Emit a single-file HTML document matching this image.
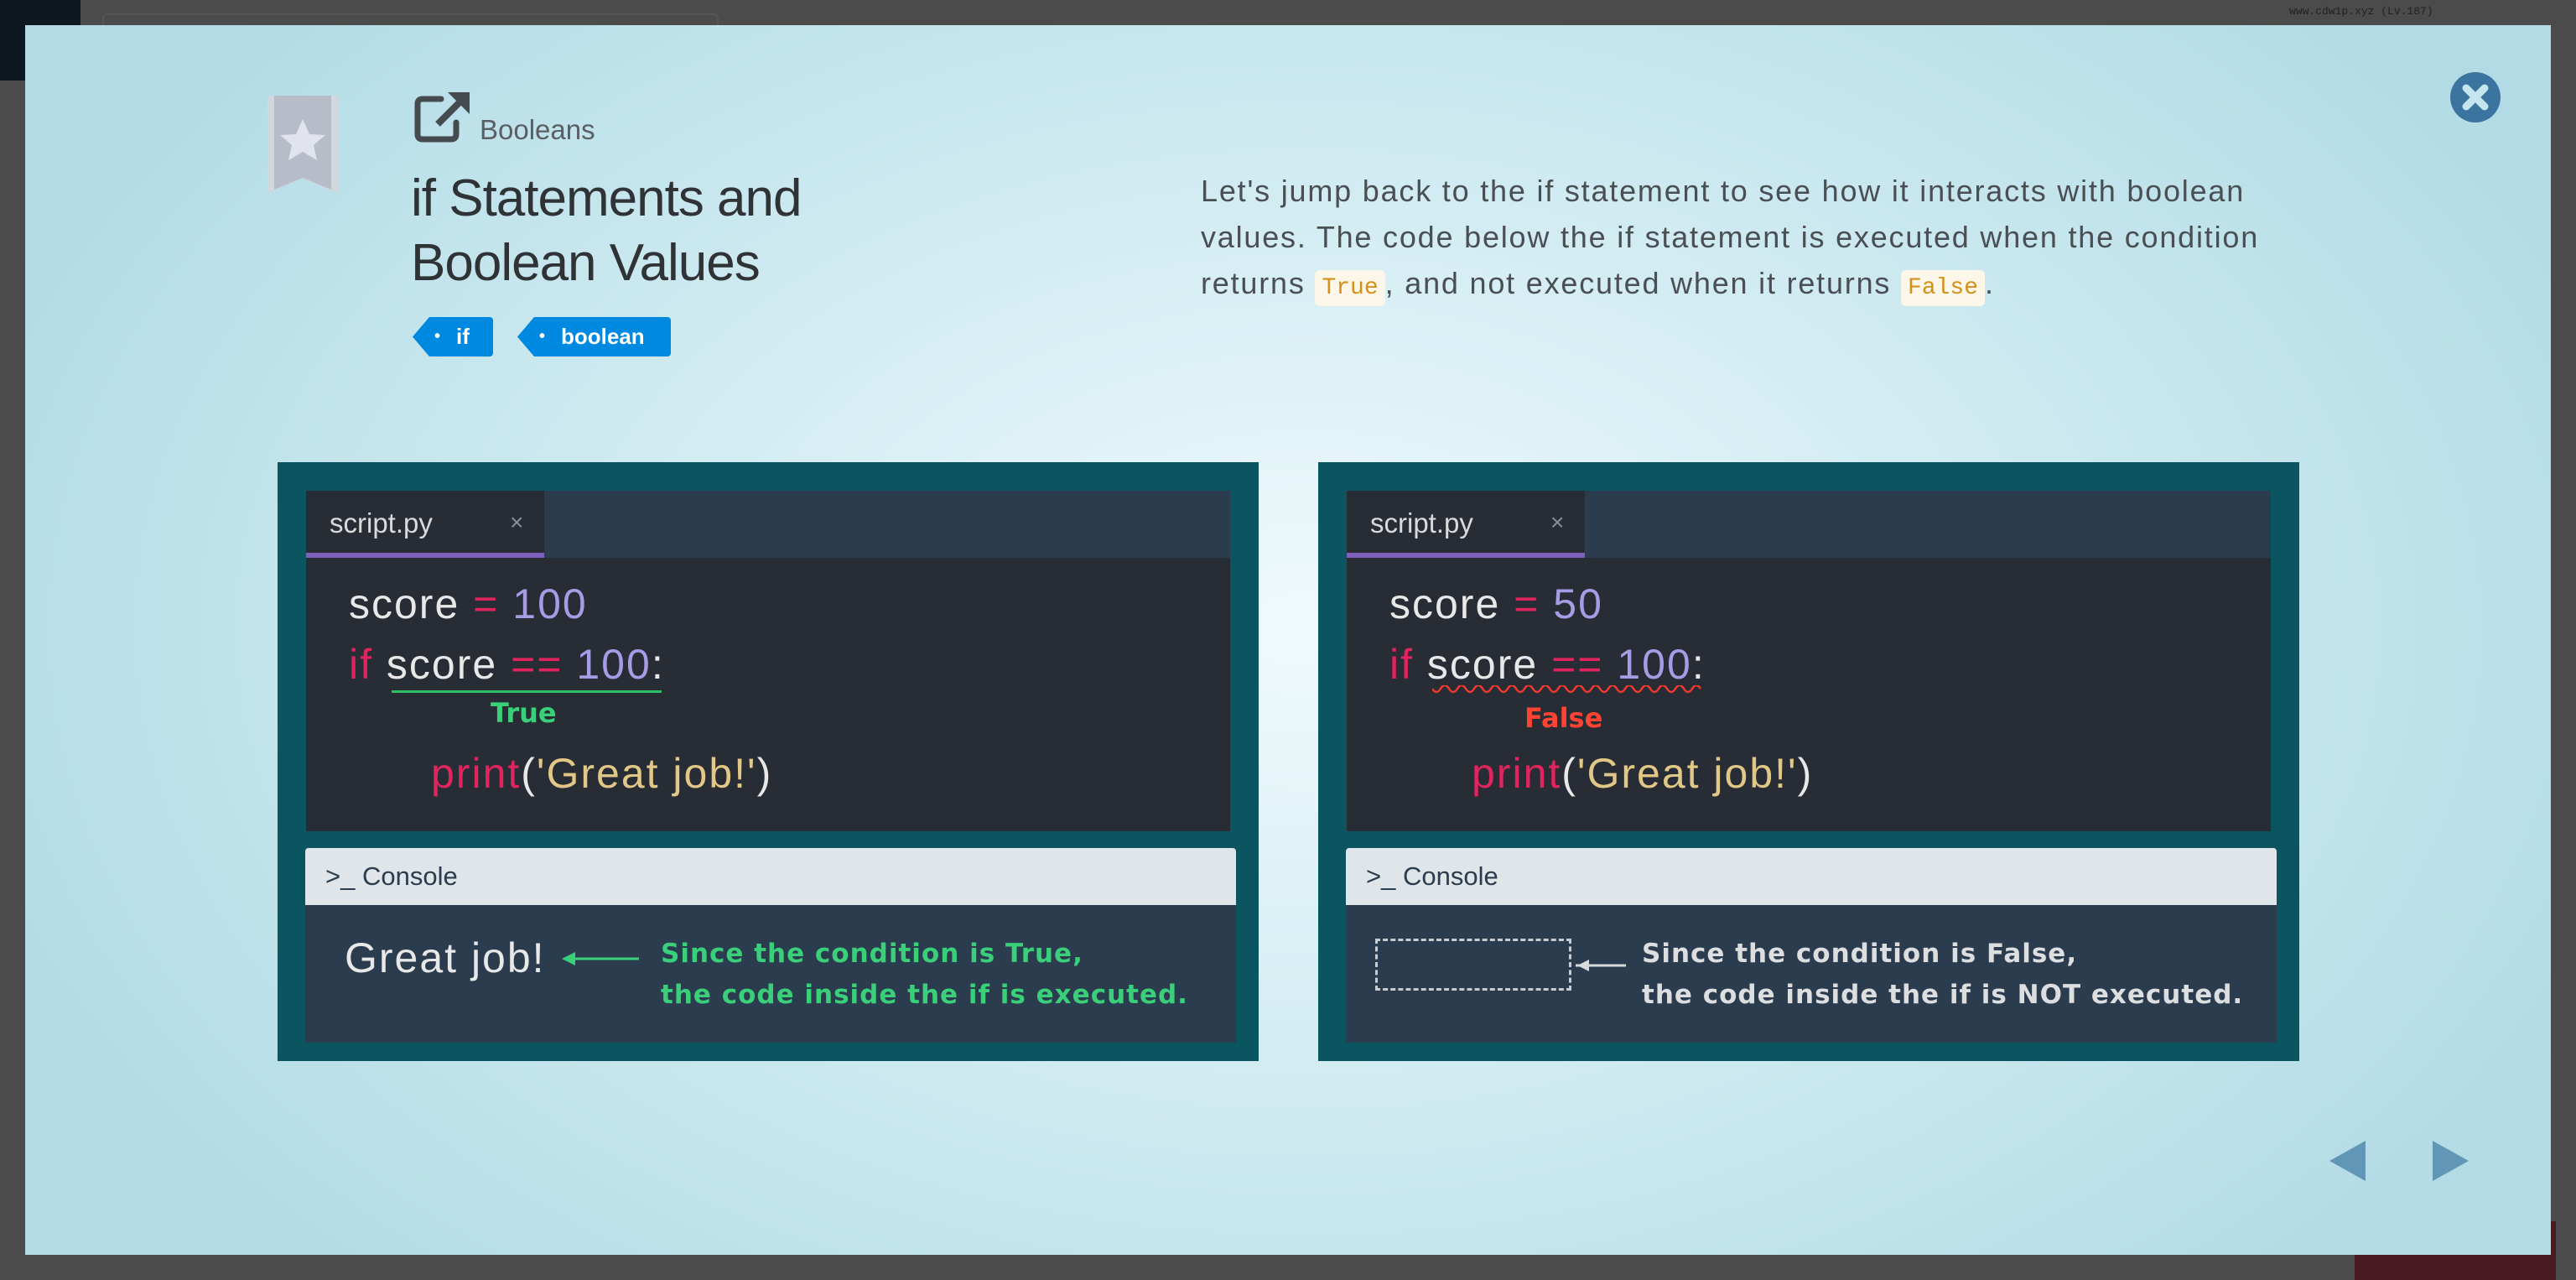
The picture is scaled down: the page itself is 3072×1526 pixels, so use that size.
<!DOCTYPE html>
<html><head><meta charset="utf-8"><style>
*{margin:0;padding:0;box-sizing:border-box}
body{width:3072px;height:1526px;background:#4b4b4b;position:relative;overflow:hidden;font-family:"Liberation Sans",sans-serif}
.a{position:absolute}
#modal{left:30px;top:30px;width:3012px;height:1466px;background:radial-gradient(ellipse 1700px 1100px at 1530px 720px,#f0fafc 0%,#d6eef4 40%,#b2dbe5 100%);overflow:hidden}
.title{font-size:62px;color:#2f3336;letter-spacing:-1px;line-height:77px;font-weight:normal}
.para{font-size:36px;color:#4a4f53;line-height:55px;letter-spacing:1.8px;white-space:nowrap}
.code-chip{background:#fdf7ea;color:#d4901a;font-family:"Liberation Mono",monospace;font-size:28px;padding:6px 8px;border-radius:6px;letter-spacing:0}
.tag{background:#0089e0;color:#fff;font-size:26px;font-weight:bold;height:47px;line-height:47px;clip-path:polygon(20px 0,100% 0,100% 100%,20px 100%,0 50%);border-radius:4px}
.panel{background:#0b5561;width:1170px;height:714px;top:521px}
.tabbar{left:34px;top:34px;width:1102px;height:80px;background:#2b3c4f}
.tab{left:0;top:0;width:284px;height:80px;background:#282c34;border-bottom:6px solid #7e5fc0}
.tab span{position:absolute;left:28px;top:20px;font-size:33px;color:#d8dadc}
.tab b{position:absolute;left:243px;top:22px;font-size:28px;color:#8a8f96;font-weight:normal}
.code{left:34px;top:114px;width:1102px;height:326px;background:#282c34}
.ln{position:absolute;font-size:50px;color:#e8e8e8;letter-spacing:2px;white-space:pre}
.k{color:#e0245e}.n{color:#a89be6}.s{color:#e2c886}
.chead{left:33px;top:460px;width:1110px;height:68px;background:#dfe5e8;border-radius:4px 4px 0 0}
.chead span{position:absolute;left:24px;top:16px;font-size:31px;color:#2b3c4f}
.cbody{left:33px;top:528px;width:1110px;height:164px;background:#2b3c4f}
.note{position:absolute;font-size:31px;font-weight:bold;line-height:49px;letter-spacing:1px;font-family:"DejaVu Sans",sans-serif}
</style></head><body>
<div class="a" style="left:0;top:0;width:96px;height:96px;background:#0d1821"></div>
<div class="a" style="left:122px;top:16px;width:735px;height:30px;border:2px solid #555;border-radius:6px"></div>
<div class="a" style="left:2730px;top:6px;font-size:13px;color:#222;font-family:'Liberation Mono',monospace">www.cdw1p.xyz (Lv.187)</div>
<div class="a" style="left:2808px;top:1456px;width:240px;height:70px;background:#4a1a22"></div>

<div id="modal" class="a">
 <svg class="a" style="left:289px;top:84px" width="84" height="116" viewBox="0 0 84 116">
  <polygon points="0,0 84,0 84,116 42,99 0,116" fill="#d2d7de"/>
  <polygon points="8,0 76,0 76,112 42,98 8,112" fill="#b6bcc8"/>
  <polygon points="42,28 50,46 69,47 55,59 59,77 42,67 25,77 29,59 15,47 34,46" fill="#e1e4ec"/>
 </svg>
 <svg class="a" style="left:464px;top:80px" width="70" height="60" viewBox="0 0 70 60">
  <path d="M32 8 H10 Q4 8 4 14 V50 Q4 56 10 56 H44 Q50 56 50 50 V36" fill="none" stroke="#454b4f" stroke-width="7" stroke-linecap="round"/>
  <path d="M28 38 L58 8" stroke="#454b4f" stroke-width="8"/>
  <polygon points="40,0 66,0 66,26" fill="#454b4f"/>
 </svg>
 <div class="a" style="left:542px;top:106px;font-size:33px;color:#5a5f63">Booleans</div>
 <div class="a title" style="left:460px;top:168px">if Statements and<br>Boolean Values</div>
 <div class="a tag" style="left:462px;top:348px;width:96px"><span style="position:absolute;left:26px;font-size:20px">•</span><span style="position:absolute;left:52px">if</span></div>
 <div class="a tag" style="left:587px;top:348px;width:183px"><span style="position:absolute;left:26px;font-size:20px">•</span><span style="position:absolute;left:52px">boolean</span></div>

 <div class="a para" style="left:1402px;top:170px">Let's jump back to the if statement to see how it interacts with boolean<br>values. The code below the if statement is executed when the condition<br>returns <span class="code-chip">True</span>, and not executed when it returns <span class="code-chip">False</span>.</div>

 <svg class="a" style="left:2892px;top:56px" width="60" height="60" viewBox="0 0 60 60">
  <circle cx="30" cy="30" r="30" fill="#3b749e"/>
  <path d="M19 19 L41 41 M41 19 L19 41" stroke="#c5e6ee" stroke-width="9" stroke-linecap="round"/>
 </svg>

 <div class="a panel" style="left:301px">
  <div class="a tabbar"><div class="a tab"><span>script.py</span><b>×</b></div></div>
  <div class="a code">
   <div class="ln" style="left:51px;top:26px">score <span class="k">=</span> <span class="n">100</span></div>
   <div class="ln" style="left:51px;top:98px"><span class="k">if</span> score <span class="k">==</span> <span class="n">100</span>:</div>
   <div class="a" style="left:102px;top:158px;width:322px;height:3px;background:#2fbf68"></div>
   <div class="a" style="left:220px;top:166px;font-size:32px;font-weight:bold;color:#3ad07a;font-family:'DejaVu Sans',sans-serif">True</div>
   <div class="ln" style="left:149px;top:228px"><span class="k">print</span>(<span class="s">'Great job!'</span>)</div>
  </div>
  <div class="a chead"><span>&gt;_ Console</span></div>
  <div class="a cbody">
   <div class="ln" style="left:47px;top:34px">Great job!</div>
   <svg class="a" style="left:306px;top:54px" width="94" height="20"><path d="M2 10 H92" stroke="#3ad07a" stroke-width="3"/><polygon points="0,10 16,2 16,18" fill="#3ad07a"/></svg>
   <div class="note" style="left:424px;top:34px;color:#3ad07a">Since the condition is True,<br>the code inside the if is executed.</div>
  </div>
 </div>

 <div class="a panel" style="left:1542px">
  <div class="a tabbar"><div class="a tab"><span>script.py</span><b>×</b></div></div>
  <div class="a code">
   <div class="ln" style="left:51px;top:26px">score <span class="k">=</span> <span class="n">50</span></div>
   <div class="ln" style="left:51px;top:98px"><span class="k">if</span> score <span class="k">==</span> <span class="n">100</span>:</div>
   <svg class="a" style="left:102px;top:152px" width="322" height="12"><path d="M0 4 q5 8 10 0 t10 0 t10 0 t10 0 t10 0 t10 0 t10 0 t10 0 t10 0 t10 0 t10 0 t10 0 t10 0 t10 0 t10 0 t10 0 t10 0 t10 0 t10 0 t10 0 t10 0 t10 0 t10 0 t10 0 t10 0 t10 0 t10 0 t10 0 t10 0 t10 0 t10 0 t10 0" fill="none" stroke="#f03a2e" stroke-width="2.5"/></svg>
   <div class="a" style="left:212px;top:172px;font-size:32px;font-weight:bold;color:#ff4433;font-family:'DejaVu Sans',sans-serif">False</div>
   <div class="ln" style="left:149px;top:228px"><span class="k">print</span>(<span class="s">'Great job!'</span>)</div>
  </div>
  <div class="a chead"><span>&gt;_ Console</span></div>
  <div class="a cbody">
   <div class="a" style="left:35px;top:40px;width:234px;height:62px;border:3px dashed #c8ccd0"></div>
   <svg class="a" style="left:272px;top:60px" width="64" height="24"><path d="M2 12 H62" stroke="#d8dadc" stroke-width="3"/><polygon points="4,12 18,5 18,19" fill="#d8dadc"/></svg>
   <div class="note" style="left:353px;top:34px;color:#dcdee0">Since the condition is False,<br>the code inside the if is NOT executed.</div>
  </div>
 </div>

 <svg class="a" style="left:2748px;top:1330px" width="44" height="48"><polygon points="0,24 43,0 43,48" fill="#6296b6"/></svg>
 <svg class="a" style="left:2871px;top:1330px" width="44" height="48"><polygon points="0,0 43,24 0,48" fill="#6296b6"/></svg>
</div>
</body></html>
